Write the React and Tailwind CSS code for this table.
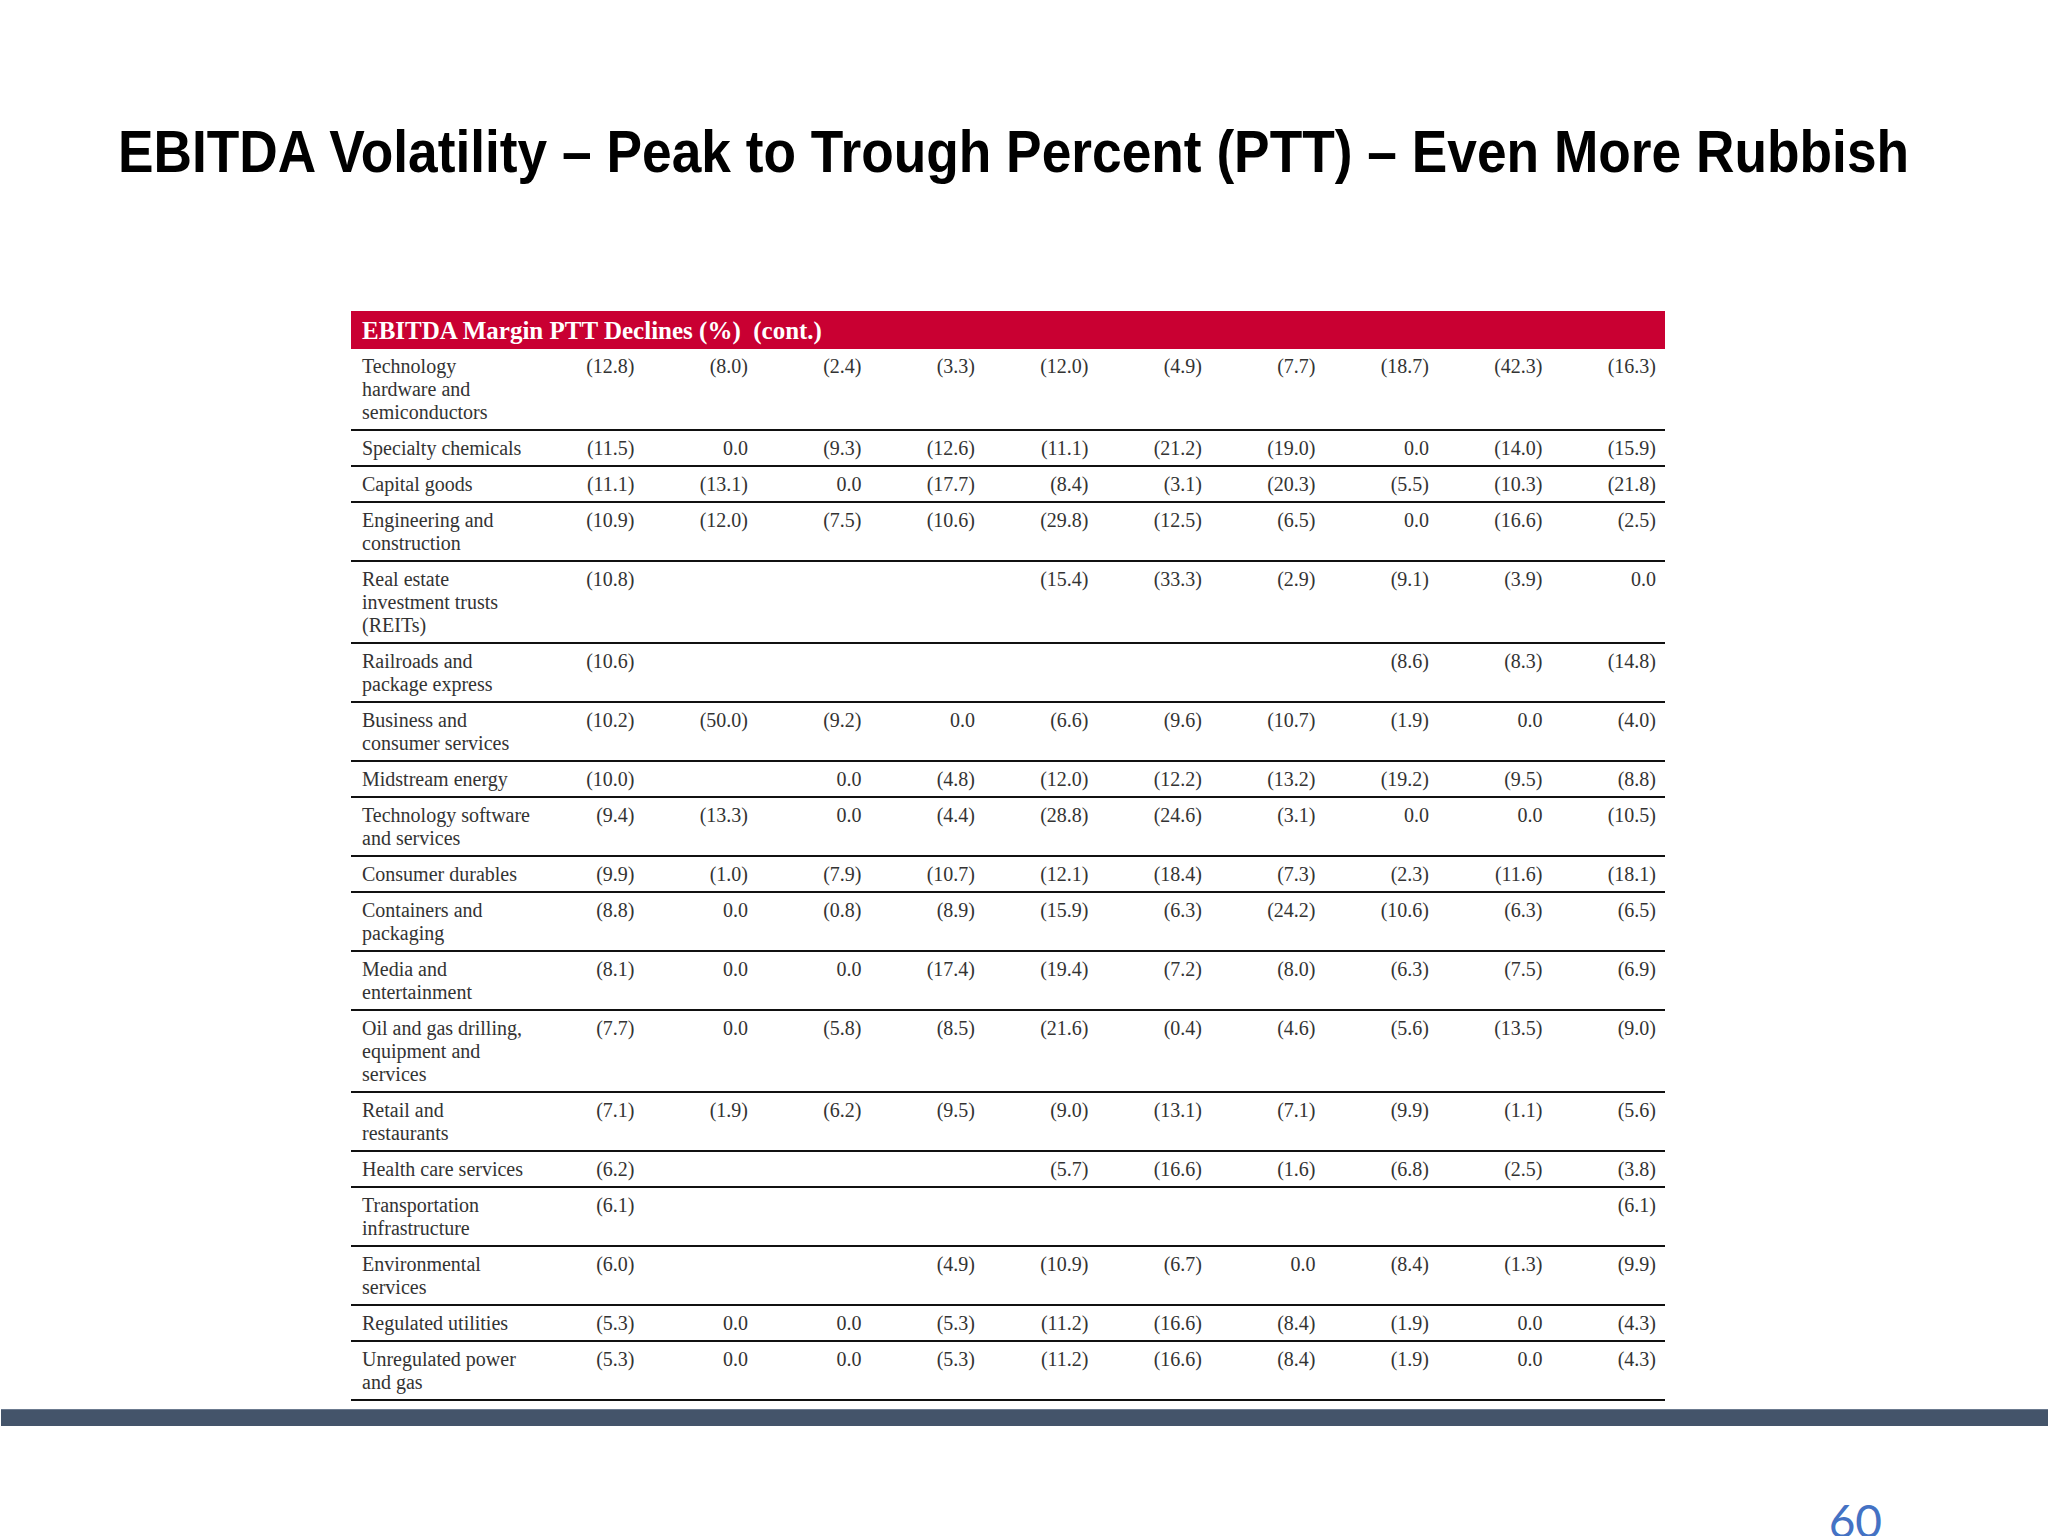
const rows = [
  { label: ["Technology", "hardware and", "semiconductors"], v: ["(12.8)", "(8.0)", "(2.4)", "(3.3)", "(12.0)", "(4.9)", "(7.7)", "(18.7)", "(42.3)", "(16.3)"] },
  { label: ["Specialty chemicals"], v: ["(11.5)", "0.0", "(9.3)", "(12.6)", "(11.1)", "(21.2)", "(19.0)", "0.0", "(14.0)", "(15.9)"] },
  { label: ["Capital goods"], v: ["(11.1)", "(13.1)", "0.0", "(17.7)", "(8.4)", "(3.1)", "(20.3)", "(5.5)", "(10.3)", "(21.8)"] },
  { label: ["Engineering and", "construction"], v: ["(10.9)", "(12.0)", "(7.5)", "(10.6)", "(29.8)", "(12.5)", "(6.5)", "0.0", "(16.6)", "(2.5)"] },
  { label: ["Real estate", "investment trusts", "(REITs)"], v: ["(10.8)", "", "", "", "(15.4)", "(33.3)", "(2.9)", "(9.1)", "(3.9)", "0.0"] },
  { label: ["Railroads and", "package express"], v: ["(10.6)", "", "", "", "", "", "", "(8.6)", "(8.3)", "(14.8)"] },
  { label: ["Business and", "consumer services"], v: ["(10.2)", "(50.0)", "(9.2)", "0.0", "(6.6)", "(9.6)", "(10.7)", "(1.9)", "0.0", "(4.0)"] },
  { label: ["Midstream energy"], v: ["(10.0)", "", "0.0", "(4.8)", "(12.0)", "(12.2)", "(13.2)", "(19.2)", "(9.5)", "(8.8)"] },
  { label: ["Technology software", "and services"], v: ["(9.4)", "(13.3)", "0.0", "(4.4)", "(28.8)", "(24.6)", "(3.1)", "0.0", "0.0", "(10.5)"] },
  { label: ["Consumer durables"], v: ["(9.9)", "(1.0)", "(7.9)", "(10.7)", "(12.1)", "(18.4)", "(7.3)", "(2.3)", "(11.6)", "(18.1)"] },
  { label: ["Containers and", "packaging"], v: ["(8.8)", "0.0", "(0.8)", "(8.9)", "(15.9)", "(6.3)", "(24.2)", "(10.6)", "(6.3)", "(6.5)"] },
  { label: ["Media and", "entertainment"], v: ["(8.1)", "0.0", "0.0", "(17.4)", "(19.4)", "(7.2)", "(8.0)", "(6.3)", "(7.5)", "(6.9)"] },
  { label: ["Oil and gas drilling,", "equipment and", "services"], v: ["(7.7)", "0.0", "(5.8)", "(8.5)", "(21.6)", "(0.4)", "(4.6)", "(5.6)", "(13.5)", "(9.0)"] },
  { label: ["Retail and", "restaurants"], v: ["(7.1)", "(1.9)", "(6.2)", "(9.5)", "(9.0)", "(13.1)", "(7.1)", "(9.9)", "(1.1)", "(5.6)"] },
  { label: ["Health care services"], v: ["(6.2)", "", "", "", "(5.7)", "(16.6)", "(1.6)", "(6.8)", "(2.5)", "(3.8)"] },
  { label: ["Transportation", "infrastructure"], v: ["(6.1)", "", "", "", "", "", "", "", "", "(6.1)"] },
  { label: ["Environmental", "services"], v: ["(6.0)", "", "", "(4.9)", "(10.9)", "(6.7)", "0.0", "(8.4)", "(1.3)", "(9.9)"] },
  { label: ["Regulated utilities"], v: ["(5.3)", "0.0", "0.0", "(5.3)", "(11.2)", "(16.6)", "(8.4)", "(1.9)", "0.0", "(4.3)"] },
  { label: ["Unregulated power", "and gas"], v: ["(5.3)", "0.0", "0.0", "(5.3)", "(11.2)", "(16.6)", "(8.4)", "(1.9)", "0.0", "(4.3)"] },
];

export default function App() {
  return (
    <div className="w-[2048px] h-[1536px] bg-white overflow-hidden">
      {/* Title (condensed by scaling, no narrow face installed) */}
      <div className="pl-[118px] pt-[122px]">
        <h1 className="w-max origin-left scale-x-[0.888] text-[60px] leading-none font-bold text-black whitespace-nowrap font-['Liberation_Sans',sans-serif]">
          EBITDA Volatility – Peak to Trough Percent (PTT) – Even More Rubbish
        </h1>
      </div>

      {/* Table */}
      <div className="ml-[351px] mt-[129px] w-[1314px] font-['Liberation_Serif',serif] text-[#333]">
        <div className="h-[38px] bg-[#c90032] flex items-center pl-[11px] text-white font-bold text-[25px] leading-none">
          EBITDA Margin PTT Declines (%)&nbsp;&nbsp;(cont.)
        </div>
        {rows.map((r, i) => (
          <div
            key={i}
            className="grid grid-cols-[179px_repeat(10,minmax(0,1fr))] border-b-2 border-[#111] pt-[6px] pb-[5px] text-[20px] leading-[23px]"
          >
            <div className="pl-[11px] whitespace-nowrap">
              {r.label.map((l, j) => (
                <div key={j}>{l}</div>
              ))}
            </div>
            {r.v.map((x, j) => (
              <div key={j} className="text-right pr-[9px]">
                {x}
              </div>
            ))}
          </div>
        ))}
      </div>

      {/* Footer bar */}
      <div className="mt-[8px] h-[17px] ml-[1px] bg-[#44546a] border-t border-[#6b7a8f]" />

      {/* Page number */}
      <div className="mt-[72px] flex justify-end pr-[166px] font-['Lato',sans-serif] text-[46px] leading-none text-[#4472c4]">
        60
      </div>
    </div>
  );
}
